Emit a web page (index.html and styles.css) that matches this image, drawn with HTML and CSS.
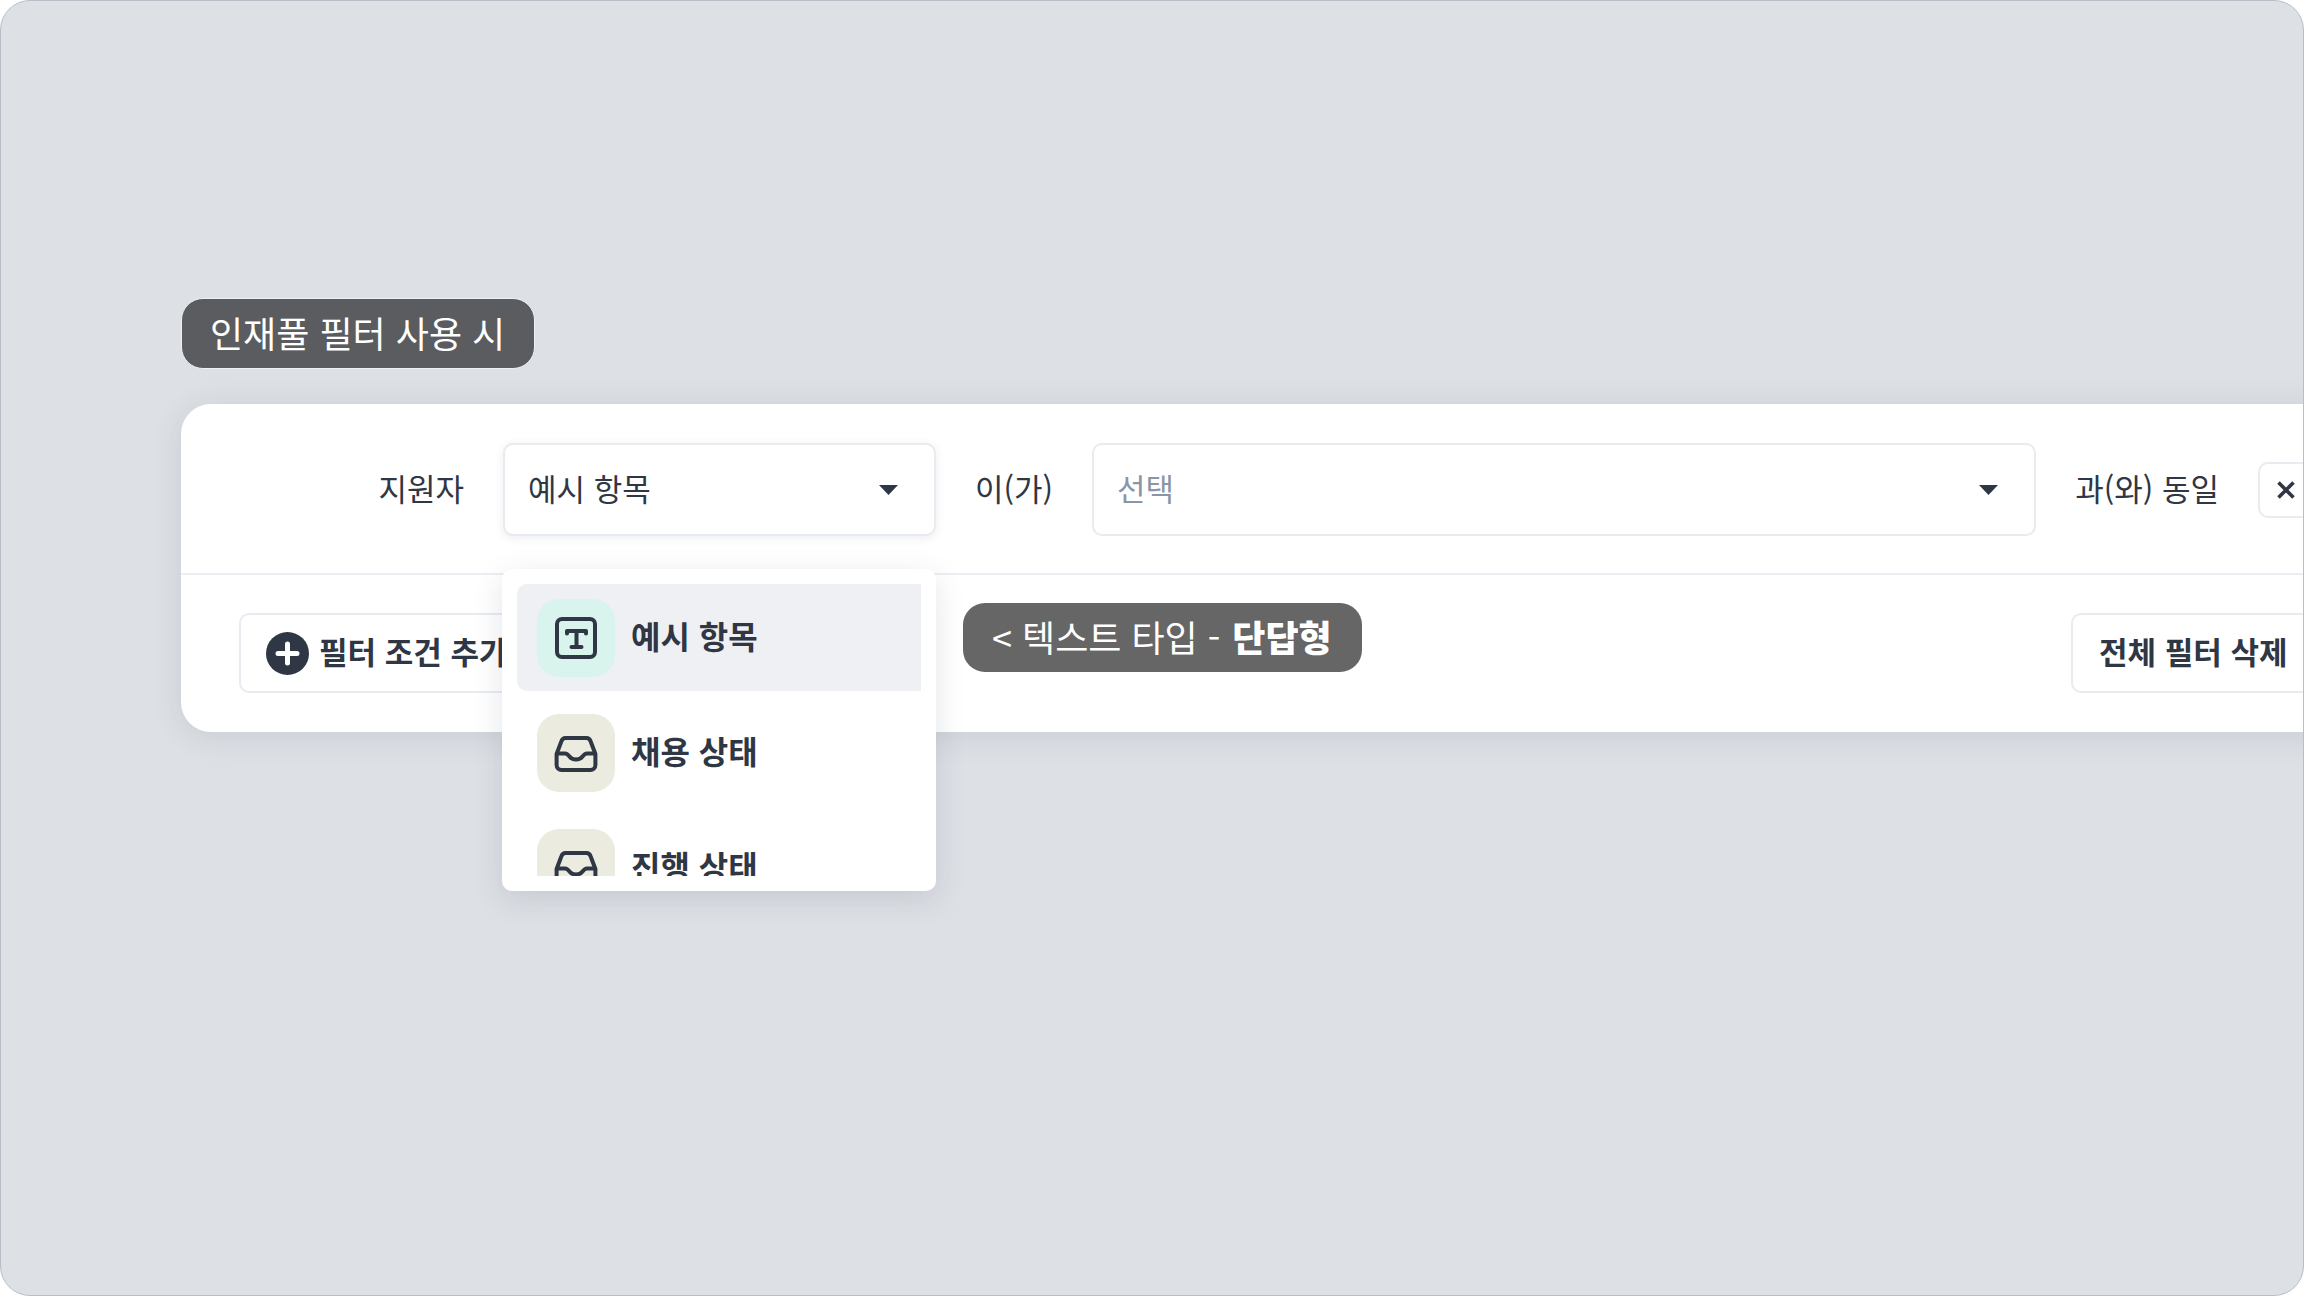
FILE: index.html
```html
<!DOCTYPE html>
<html lang="ko">
<head>
    <meta charset="UTF-8">
    <title>인재풀 필터</title>
    <link rel="stylesheet" href="styles.css">
</head>
<body>

    <div class="frame">
        <div class="tag tag-title">인재풀 필터 사용 시</div>

        <div class="filter-card">
            <div class="filter-row">
                <span class="subject-label">지원자</span>
                <div class="select select-field">
                    <span class="select-text">예시 항목</span>
                    <svg class="caret" viewBox="0 0 19 10"><path d="M0 0h19L9.500 10z"/></svg>
                </div>
                <span class="row-text">이(가)</span>
                <div class="select select-value">
                    <span class="select-text placeholder">선택</span>
                    <svg class="caret" viewBox="0 0 19 10"><path d="M0 0h19L9.500 10z"/></svg>
                </div>
                <span class="row-text">과(와) 동일</span>
                <button class="btn btn-remove">
                    <svg viewBox="0 0 20 20"><path d="M2.500 2.500l15 15M17.500 2.500l-15 15"/></svg>
                </button>
            </div>

            <div class="filter-actions">
                <button class="btn btn-add">
                    <svg viewBox="0 0 43 43">
                        <circle cx="21.5" cy="21.5" r="21.5" class="plus-bg"/>
                        <path d="M21.500 12v19M12 21.500h19" class="plus-mark"/>
                    </svg>
                    <span class="label">필터 조건 추가</span>
                </button>
                <button class="btn btn-clear"><span class="label">전체 필터 삭제</span></button>
            </div>
        </div>

        <!-- open dropdown of the first select -->
        <div class="dropdown">
            <ul class="dropdown-list">
                <li class="dropdown-item active">
                    <span class="item-icon icon-text">
                        <svg viewBox="0 0 48 48">
                            <rect x="5" y="5" width="38" height="38" rx="5"/>
                            <path d="M15 19.500V17h19v2.500M24.500 17v16M19.500 33h10"/>
                        </svg>
                    </span>
                    <span class="label">예시 항목</span>
                </li>
                <li class="dropdown-item">
                    <span class="item-icon icon-status">
                        <svg viewBox="0 0 48 48">
                            <path d="M4.600 25v11a5 5 0 0 0 5 5h28.800a5 5 0 0 0 5-5V25L38.500 12a4.500 4.500 0 0 0-4-3h-21a4.500 4.500 0 0 0-4 3z"/>
                            <path d="M5 24.500h8c2 0 3 1 4.500 3 3 4 10 4 13 0 1.500-2 2.500-3 4.500-3h8"/>
                        </svg>
                    </span>
                    <span class="label">채용 상태</span>
                </li>
                <li class="dropdown-item">
                    <span class="item-icon icon-status">
                        <svg viewBox="0 0 48 48">
                            <path d="M4.600 25v11a5 5 0 0 0 5 5h28.800a5 5 0 0 0 5-5V25L38.500 12a4.500 4.500 0 0 0-4-3h-21a4.500 4.500 0 0 0-4 3z"/>
                            <path d="M5 24.500h8c2 0 3 1 4.500 3 3 4 10 4 13 0 1.500-2 2.500-3 4.500-3h8"/>
                        </svg>
                    </span>
                    <span class="label">진행 상태</span>
                </li>
            </ul>
        </div>

        <div class="tag tag-note">&lt; 텍스트 타입 - <b>단답형</b></div>
    </div>

</body>
</html>
```

FILE: styles.css
```css
* {
    margin: 0;
    padding: 0;
    box-sizing: border-box;
}

body {
    font-family: "Noto Sans CJK KR", "Noto Sans", sans-serif;
    color: #2f3644;
    background-color: #fff;
}

.frame {
    position: relative;
    width: 2304px;
    height: 1296px;
    padding: 297px 0 0 180px;
    overflow: hidden;
    background-color: #dde0e5;
    border: 1px solid #b9bdc7;
    border-radius: 30px;
}

/* Dark annotation labels */
.tag {
    display: flex;
    align-items: center;
    height: 71px;
    padding-bottom: 4px;
    border-radius: 22px;
    color: #fff;
    font-size: 36px;
    white-space: nowrap;
}

.tag-title {
    width: 354px;
    margin-bottom: 35px;
    padding-left: 28px;
    background-color: #5a5c5f;
    border: 1px solid #eef0f3;
}

.tag-note {
    position: absolute;
    left: 962px;
    top: 602px;
    width: 399px;
    height: 69px;
    padding-left: 29px;
    background-color: #666;
}

.tag-note b {
    margin-left: 12px;
    font-weight: 900;
}

/* Filter card */
.filter-card {
    width: 2191px;
    height: 328px;
    background-color: #fff;
    border-radius: 30px;
    box-shadow: 0 4px 30px rgba(60, 70, 90, 0.12);
}

.filter-row {
    display: flex;
    align-items: center;
    gap: 39px;
    height: 171px;
    padding: 2px 58px 0;
    border-bottom: 2px solid #eceef3;
}

.subject-label {
    width: 225px;
    text-align: right;
}

.subject-label,
.row-text {
    padding-bottom: 4px;
    font-size: 31px;
    white-space: nowrap;
}

.select {
    display: flex;
    align-items: center;
    justify-content: space-between;
    height: 93px;
    padding: 0 36px 0 23px;
    background-color: #fff;
    border: 2px solid #e9ebf1;
    border-radius: 10px;
    font-size: 31px;
}

.select-text {
    padding-bottom: 4px;
}

.select-field {
    width: 433px;
    flex-shrink: 0;
    box-shadow: 0 2px 10px rgba(60, 70, 90, 0.1);
}

.select-value {
    flex: 1;
}

.placeholder {
    color: #8b95a5;
}

.caret {
    width: 19px;
    height: 10px;
    fill: #2f3644;
}

.btn {
    display: flex;
    align-items: center;
    background-color: #fff;
    border: 2px solid #e9ebf1;
    border-radius: 10px;
    color: #2f3644;
    font-family: inherit;
    font-size: 31px;
    font-weight: 700;
    white-space: nowrap;
}

.label {
    padding-bottom: 5px;
}

.btn-remove {
    flex-shrink: 0;
    justify-content: center;
    width: 56px;
    height: 56px;
}

.btn-remove svg {
    width: 20px;
    height: 20px;
    fill: none;
    stroke: #2f3644;
    stroke-width: 3.6;
}

.filter-actions {
    display: flex;
    justify-content: space-between;
    padding: 38px 58px;
}

.btn-add,
.btn-clear {
    height: 80px;
    padding: 0 0 0 25px;
}

.btn-add {
    gap: 10px;
    width: 300px;
}

.btn-clear {
    width: 243px;
    padding-left: 26px;
}

.btn-add svg {
    width: 43px;
    height: 43px;
}

.plus-bg {
    fill: #2f3644;
}

.plus-mark {
    stroke: #fff;
    stroke-width: 5;
    stroke-linecap: round;
}

/* Dropdown menu */
.dropdown {
    position: absolute;
    left: 501px;
    top: 568px;
    width: 434px;
    height: 322px;
    padding: 15px;
    background-color: #fff;
    border-radius: 10px;
    box-shadow: 0 8px 30px rgba(60, 70, 90, 0.14);
}

.dropdown-list {
    display: flex;
    flex-direction: column;
    gap: 8px;
    height: 292px;
    overflow: hidden;
    list-style: none;
}

.dropdown-item {
    display: flex;
    align-items: center;
    gap: 16px;
    flex-shrink: 0;
    height: 107px;
    padding-left: 20px;
    border-radius: 10px 0 0 10px;
    font-size: 32px;
    font-weight: 700;
}

.dropdown-item.active {
    background-color: #eff0f4;
}

.item-icon {
    display: flex;
    align-items: center;
    justify-content: center;
    flex-shrink: 0;
    width: 78px;
    height: 78px;
    border-radius: 22px;
}

.item-icon svg {
    width: 48px;
    height: 48px;
    fill: none;
    stroke: #2f3644;
    stroke-width: 4;
    stroke-linecap: round;
    stroke-linejoin: round;
}

.icon-text {
    background-color: #d9f3ed;
}

.icon-status {
    background-color: #ecebdf;
}
```
